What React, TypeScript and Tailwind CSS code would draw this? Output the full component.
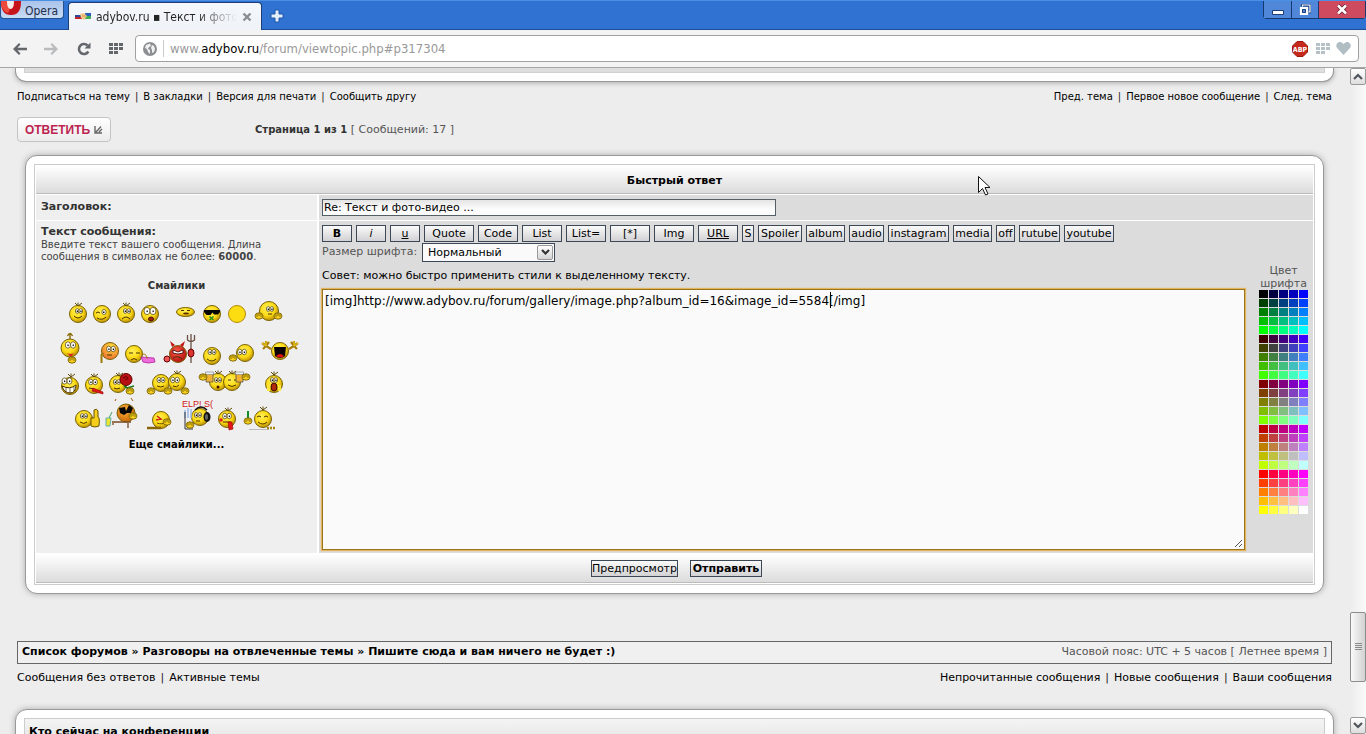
import React, { useState } from "react";

const LEVELS = ["00", "40", "80", "BF", "FF"];

function Sep() {
  return <span className="px-[5px] text-[#222]">|</span>;
}

function Face({ x, y, r = 9, fill = "url(#faceYellow)" }: { x: number; y: number; r?: number; fill?: string }) {
  return <circle cx={x} cy={y} r={r - 0.5} fill={fill} stroke="#7a6205" strokeWidth="1" />;
}

function Eyes({ x, y, size = 2 }: { x: number; y: number; size?: number }) {
  return (
    <g>
      <ellipse cx={x - size} cy={y} rx={size} ry={size + 0.6} fill="#fff" stroke="#4a3a00" strokeWidth="0.7" />
      <ellipse cx={x + size} cy={y} rx={size} ry={size + 0.6} fill="#fff" stroke="#4a3a00" strokeWidth="0.7" />
      <rect x={x - size - 0.5} y={y - 0.5} width="1.3" height="1.6" fill="#111" />
      <rect x={x + size - 0.5} y={y - 0.5} width="1.3" height="1.6" fill="#111" />
    </g>
  );
}

function Hair({ x, y }: { x: number; y: number }) {
  return <path d={`M${x} ${y}l-3 -3M${x} ${y}l0 -3.5M${x} ${y}l4 -3`} stroke="#5d4a0a" strokeWidth="1" fill="none" />;
}

function Hand({ x, y }: { x: number; y: number }) {
  return (
    <g stroke="#6b5404" strokeWidth="0.8">
      <ellipse cx={x} cy={y} rx="4" ry="3.2" fill="#f6cf1c" />
      <path d={`M${x - 2} ${y - 2}v3M${x} ${y - 3}v3M${x + 2} ${y - 2}v3`} fill="none" />
    </g>
  );
}

function Mouth({ d, fill = "none" }: { d: string; fill?: string }) {
  return <path d={d} fill={fill} stroke="#4a3200" strokeWidth="1" />;
}

function Smiley({ x, y, w, h, name, children }: { x: number; y: number; w: number; h: number; name: string; children: React.ReactNode }) {
  return (
    <a href="#smile" aria-label={name} className="block">
      <svg width={w} height={h} viewBox={`${x} ${y} ${w} ${h}`} className="block overflow-visible">
        {children}
      </svg>
    </a>
  );
}

function Smilies() {
  return (
    <div className="flex flex-col items-center">
      <svg width="0" height="0" className="absolute" aria-hidden="true">
        <defs>
          <radialGradient id="faceYellow" cx="42%" cy="36%" r="65%">
            <stop offset="0%" stopColor="#fff05a" />
            <stop offset="60%" stopColor="#fbd914" />
            <stop offset="100%" stopColor="#b98d06" />
          </radialGradient>
          <radialGradient id="faceRed" cx="42%" cy="36%" r="65%">
            <stop offset="0%" stopColor="#ff5a4a" />
            <stop offset="100%" stopColor="#b01010" />
          </radialGradient>
          <radialGradient id="faceOrange" cx="42%" cy="36%" r="65%">
            <stop offset="0%" stopColor="#ffb53c" />
            <stop offset="100%" stopColor="#c96808" />
          </radialGradient>
          <radialGradient id="faceBlush" cx="60%" cy="25%" r="80%">
            <stop offset="0%" stopColor="#ffe23c" />
            <stop offset="100%" stopColor="#ee6a30" />
          </radialGradient>
        </defs>
      </svg>

      <div className="flex">
        <Smiley x={15} y={28} w={24} h={30} name="smile">
          <Face x={27} y={44} /><Hair x={27} y={36} /><Eyes x={28} y={41} size={1.8} /><Mouth d="M23 46q4 4 8 0" />
        </Smiley>
        <Smiley x={39} y={28} w={24} h={30} name="wink">
          <Face x={51} y={44} /><ellipse cx="53" cy="42" rx="2.200" ry="2.500" fill="#fff" stroke="#4a3a00" strokeWidth="0.700" /><rect x="52" y="41.500" width="1.500" height="1.500" fill="#111" /><Mouth d="M45 43q2 -2 4 0M46 48q5 3 9 -1" />
        </Smiley>
        <Smiley x={63} y={28} w={24} h={30} name="sad">
          <Face x={75} y={44} /><Hair x={75} y={36} /><Eyes x={76} y={41} size={1.8} /><Mouth d="M71 49q4 -4 8 0" />
        </Smiley>
        <Smiley x={87} y={28} w={24} h={30} name="shock">
          <Face x={99} y={44} /><Eyes x={99} y={41} size={3} /><ellipse cx="100" cy="49" rx="2.5" ry="2" fill="#a02010" stroke="#401000" />
        </Smiley>
        <Smiley x={111} y={28} w={37} h={30} name="flat">
          <ellipse cx="134.5" cy="42" rx="9" ry="4.5" fill="url(#faceYellow)" stroke="#7a6205" /><Mouth d="M130 40.500h3M136 40.500h3" /><ellipse cx="135" cy="43.500" rx="3" ry="1" fill="#5a2a00" />
        </Smiley>
        <Smiley x={148} y={28} w={26} h={30} name="cool">
          <Face x={161} y={44} /><path d="M153 40h16v2l-2 2.500h-4l-1.500 -2l-2 2.500h-4l-2.500 -3z" fill="#050505" /><path d="M158.500 46.500l4 3.500M162.500 46.500l-4 3.500" stroke="#158a1a" strokeWidth="1.200" />
        </Smiley>
        <Smiley x={174} y={28} w={25} h={30} name="plain">
          <circle cx="186" cy="44" r="8.500" fill="#fbdd12" stroke="#b58a08" />
        </Smiley>
        <Smiley x={199} y={28} w={36} h={30} name="hands">
          <Face x={218} y={41} r={10} /><Eyes x={219} y={39} size={1.8} /><Mouth d="M217 44h4" /><Hand x={208} y={46} /><Hand x={227} y={46} />
        </Smiley>
      </div>

      <div className="flex">
        <Smiley x={2} y={58} w={39} h={39} name="idea">
          <path d="M21 70v-6M18.500 66q2.500 -5 5 0" stroke="#8a6a08" strokeWidth="1.400" fill="none" /><Face x={21} y={78} r={9.5} /><Eyes x={21.5} y={75} size={2.6} /><path d="M18 83q4 2 7 0l-3 4z" fill="#d22" /><Hand x={23} y={90} />
        </Smiley>
        <Smiley x={41} y={58} w={32} h={39} name="blush">
          <Face x={61} y={81} fill="url(#faceBlush)" /><Eyes x={62} y={79} size={2.2} /><Mouth d="M58 85h5" /><path d="M52.500 93v-8l2 -2" stroke="#9a7a0a" strokeWidth="2" fill="none" />
        </Smiley>
        <Smiley x={73} y={58} w={36} h={39} name="cry">
          <Face x={85} y={84} /><Mouth d="M80 83h4M87 83h4M82 90q3 -3 6 0" /><path d="M92 87l13 1l1 4q-7 2 -12 0z" fill="#f06bdc" stroke="#b020a0" strokeWidth="0.800" /><path d="M94 84q4 0 4 5" stroke="#a07d10" fill="none" />
        </Smiley>
        <Smiley x={109} y={58} w={41} h={39} name="devil">
          <Face x={129} y={84} fill="url(#faceRed)" /><path d="M123 77l-2 -6l5 4zM134 77l2 -6l-5 4z" fill="#c41414" /><path d="M124 80l5 2l5 -2v3l-5 1l-5 -1z" fill="#fff" stroke="#300" strokeWidth="0.800" /><Mouth d="M124 88q5 -3 9 1" /><path d="M142 64v29M138.500 65v5q3.500 3 7 0v-5" stroke="#6a5045" strokeWidth="1.300" fill="none" /><ellipse cx="142" cy="83" rx="3" ry="4" fill="#d33" stroke="#600" /><ellipse cx="118" cy="89" rx="3" ry="3" fill="#e55" stroke="#600" />
        </Smiley>
        <Smiley x={150} y={58} w={27} h={39} name="happy">
          <Face x={163} y={86} /><Eyes x={163} y={82} /><Mouth d="M158 89q5 4 9 0" />
        </Smiley>
        <Smiley x={177} y={58} w={33} h={39} name="whisper">
          <Face x={196} y={83} /><Eyes x={193} y={82} size={2.2} /><Hand x={184} y={88} />
        </Smiley>
        <Smiley x={210} y={58} w={42} h={39} name="scream">
          <Face x={231} y={81} /><path d="M225 77h12l-1 9q-5 4 -10 0z" fill="#080000" /><path d="M227 86q4 -4 8 0q-4 3 -8 0z" fill="#d11" />
          <path d="M222 79l-5 -3M217 76l-4 -3M217 76l-3 3M217 76v-5M217 76l3 -4M240 79l5 -3M245 76l4 -3M245 76l3 3M245 76v-5M245 76l-3 -4" stroke="#a87f08" strokeWidth="2.200" /><path d="M217 76l-4 -3M217 76v-5M245 76l4 -3M245 76v-5" stroke="#f9d920" />
        </Smiley>
      </div>

      <div className="flex">
        <Smiley x={6} y={97} w={26} h={30} name="crazy">
          <Face x={20} y={116} /><Hair x={21} y={107} /><Eyes x={17} y={111} size={2.5} /><path d="M12 116q8 4 14 -1q0 8 -6 8q-6 0 -8 -7z" fill="#fff" stroke="#433000" /><path d="M16 118v4M20 118v5M24 117v4" stroke="#433000" strokeWidth="0.700" />
        </Smiley>
        <Smiley x={32} y={97} w={26} h={30} name="tongue">
          <Face x={44} y={115} /><Hair x={44} y={107} /><Eyes x={43} y={112} size={2.2} /><Mouth d="M39 118l5 1" /><path d="M43 118l10 4v2l-11 -3z" fill="#e01818" stroke="#900" strokeWidth="0.600" />
        </Smiley>
        <Smiley x={58} y={97} w={32} h={30} name="rose">
          <Face x={68} y={114} /><Hair x={69} y={106} /><Eyes x={67} y={112} size={1.8} /><Mouth d="M64 118q3 2 6 0" /><circle cx="76" cy="109.500" r="6" fill="#b80f14" stroke="#600" /><path d="M73 108q3 -3 5 0q-1 3 -3 1" stroke="#600" fill="none" /><path d="M74 116l8 5M77 118l7 -2" stroke="#157a15" strokeWidth="1.500" /><Hand x={80} y={121} />
        </Smiley>
        <Smiley x={90} y={97} w={54} h={30} name="friends">
          <Face x={111} y={113} /><Face x={127} y={112} /><Hair x={127} y={104} /><Eyes x={111} y={110} /><Eyes x={125} y={110} size={2.2} /><Mouth d="M107 116q4 2 7 0M123 116q4 2 6 -1" /><Hand x={101} y={121} /><Hand x={135} y={121} /><Hand x={118} y={121} />
        </Smiley>
        <Smiley x={144} y={97} w={62} h={30} name="beer">
          <Face x={168} y={112} /><Face x={182} y={112} /><Hair x={168} y={104} /><Hair x={182} y={104} /><Eyes x={168} y={110} size={1.8} /><Mouth d="M178 110h3M184 110h3M178 115q4 3 8 0" /><circle cx="168" cy="117" r="1.500" fill="#401000" />
          <path d="M156 103h7v9h-7zM186 103h7v9h-7z" fill="#f0b030" stroke="#555" strokeWidth="0.800" /><path d="M155.500 102h8v2.500h-8zM185.500 102h8v2.500h-8z" fill="#e8f0f8" stroke="#777" strokeWidth="0.600" /><Hand x={153} y={107} /><Hand x={196} y={107} />
        </Smiley>
        <Smiley x={206} y={97} w={40} h={30} name="scared">
          <Face x={224} y={114} /><Hair x={224} y={105} /><Eyes x={224} y={110} size={1.8} /><ellipse cx="224" cy="117" rx="3" ry="4" fill="#b02a10" stroke="#3a0e00" /><path d="M218.500 121v-6M229.500 121v-6" stroke="#ffe63c" strokeWidth="3" />
        </Smiley>
      </div>

      <div className="flex">
        <Smiley x={22} y={127} w={30} h={35} name="thumb">
          <Face x={35} y={149} /><Eyes x={35} y={146} size={1.8} /><Mouth d="M31 152q4 3 7 0" /><path d="M42 148h3v-8q3 -2 4 1v6q2 0 1 9q-4 2 -8 0z" fill="#f4ce1a" stroke="#6b5404" />
        </Smiley>
        <Smiley x={52} y={127} w={42} h={35} name="relax">
          <Face x={77} y={143} r={9.5} fill="url(#faceOrange)" /><path d="M70 138l6 -1l1 4l3 -6l4 3l-2 5l-4 0l-3 2l-4 -2z" fill="#080808" /><path d="M67 129l-1 2M82 128l2 3" stroke="#a05a10" /><path d="M63 152h19M64 153v2M79 153v5" stroke="#7a4a20" strokeWidth="1.300" /><path d="M57 148h5l-1 8h-4z" fill="#e8e830" stroke="#6aa" /><path d="M60 148l3 -6" stroke="#3ca060" /><Hand x={84} y={146} />
        </Smiley>
        <Smiley x={94} y={127} w={36} h={35} name="kiss">
          <Face x={112} y={150} /><path d="M108 146l4 3l-5 1" stroke="#d02010" strokeWidth="1.500" fill="none" /><path d="M108 153q4 2 12 -1" stroke="#6b4a04" fill="none" /><Hand x={118} y={152} /><path d="M98 158h14" stroke="#8a6508" strokeWidth="2.500" />
        </Smiley>
        <Smiley x={130} y={127} w={37} h={35} name="help">
          <text x="133" y="137" fontSize="9" fill="#d01818" className="font-['Liberation_Sans',sans-serif]">ELP! S(</text>
          <Face x={151} y={147} /><Eyes x={149} y={145} size={1.8} /><Mouth d="M147 151h4" /><path d="M136 140v8M139 138v10M142 139v9" stroke="#9ab8e8" strokeWidth="1.500" /><path d="M136 142v17h8" stroke="#333" fill="none" /><path d="M146 140q6 -6 12 0" stroke="#111" strokeWidth="1.500" fill="none" /><ellipse cx="158" cy="147" rx="3.500" ry="5" fill="#111" /><ellipse cx="157.500" cy="147" rx="1.500" ry="3" fill="#666" /><Hand x={141} y={155} />
        </Smiley>
        <Smiley x={167} y={127} w={28} h={35} name="tease">
          <Face x={178} y={149} /><Hair x={179} y={141} /><Eyes x={178} y={146} size={2.2} /><circle cx="172" cy="150" r="1.800" fill="#e02020" /><path d="M174 152h8" stroke="#402000" /><path d="M179 152l4 0l1 7l-4 1z" fill="#e31818" stroke="#900" strokeWidth="0.600" />
        </Smiley>
        <Smiley x={195} y={127} w={37} h={35} name="write">
          <Face x={214} y={149} /><Hair x={214} y={140} /><Mouth d="M208 147q2 -2 4 0M215 147q2 -2 4 0M209 152q5 4 9 0" /><path d="M199 141v12" stroke="#128a2a" strokeWidth="2" /><Hand x={199} y={151} /><path d="M200 159.500h20" stroke="#bbb" /><path d="M218 158h9" stroke="#a8880a" strokeWidth="2.500" strokeDasharray="2 1" />
        </Smiley>
      </div>
    </div>
  );
}

const CONTROL = "h-[17px] border border-[#3d4856] bg-linear-to-b from-[#fafafa] to-[#d2d2d4] p-0 text-center text-[11px] leading-[15px] text-black";

const TOOLS: [string, string][] = [
  ["B", "w-[30px] font-bold"],
  ["i", "w-[30px] italic"],
  ["u", "w-[30px] underline"],
  ["Quote", "w-[50px]"],
  ["Code", "w-[40px]"],
  ["List", "w-[40px]"],
  ["List=", "w-[40px]"],
  ["[*]", "w-[40px]"],
  ["Img", "w-[40px]"],
  ["URL", "w-[40px] underline"],
  ["S", "w-[12px]"],
  ["Spoiler", "w-[44px]"],
  ["album", "w-[39px]"],
  ["audio", "w-[35px]"],
  ["instagram", "w-[61px]"],
  ["media", "w-[39px]"],
  ["off", "w-[19px]"],
  ["rutube", "w-[41px]"],
  ["youtube", "w-[50px]"],
];

function ChromeBar() {
  return (
    <header className="font-['DejaVu_Sans_Condensed','DejaVu_Sans',sans-serif]">
      <div className="flex h-[30px] items-start border-t border-b border-t-[#4a8fe4] border-b-[#1c4d96] bg-[#2f72d2]">
        <button className="flex h-[18px] w-[64px] items-center rounded-b border border-t-0 border-[#24508f] bg-linear-to-b from-[#a9c3ea] to-[#c9dcf5]">
          <svg width="22" height="18" viewBox="0 0 22 18" className="shrink-0">
            <path d="M0 -4h20v5q0 13 -10 13q-10 0 -10 -13z" fill="#c7141a" />
            <path d="M0 -4h9v6q0 8 -2 10q-7 -2 -7 -11z" fill="#ee4a3c" />
            <path d="M6 -4h7v4q0 8 -3.500 8q-3.500 0 -3.500 -8z" fill="#f8ece8" />
          </svg>
          <span className="pl-[2px] pt-[3px] text-[12px] leading-[14px] text-[#1f2f4a]">Opera</span>
        </button>
        <div className="mt-px ml-[4px] flex h-[28px] w-[194px] items-center rounded-t border border-b-0 border-[#1d3f74] bg-linear-to-b from-[#f4f8fd] to-[#eff2f6] pl-[6px]">
          <svg width="17" height="9" viewBox="0 0 17 9" className="shrink-0">
            <path d="M0 1h7v2h-7z" fill="#f4f4f4" /><path d="M0 3h7v2h-7z" fill="#2c4a9a" /><path d="M0 5h7v2h-7z" fill="#c62020" />
            <path d="M10 1h6v3h-6z" fill="#2660b8" /><path d="M10 4h6v3h-6z" fill="#3fae50" />
            <path d="M5 2l4 -1l3 3l-3 4l-3 -2z" fill="#f1c98c" /><path d="M7 4h4" stroke="#d89a50" />
          </svg>
          <span className="ml-[4px] w-[141px] overflow-hidden bg-linear-to-r from-[#222] from-70% to-transparent bg-clip-text text-[12px] leading-[18px] whitespace-nowrap text-transparent">
            adybov.ru ▪ Текст и фото
          </span>
          <button aria-label="Закрыть вкладку" className="ml-[5px]">
            <svg width="10" height="10" viewBox="0 0 10 10"><path d="M1.500 1.500l7 7M8.500 1.500l-7 7" stroke="#8a8d92" strokeWidth="2.400" /></svg>
          </button>
        </div>
        <button aria-label="Новая вкладка" className="mt-[8px] ml-[8px]">
          <svg width="14" height="14" viewBox="0 0 14 14"><path d="M5 1h4v4h4v4h-4v4h-4v-4h-4v-4h4z" fill="#e4eefb" stroke="#1e56a8" /></svg>
        </button>
        <div className="ml-auto flex h-[18px] rounded-b border border-t-0 border-[#16396f] text-white">
          <button aria-label="Свернуть" className="flex w-[28px] items-center justify-center border-r border-[#16396f] bg-[#5087d8]">
            <svg width="12" height="14" viewBox="0 0 12 14"><path d="M0.500 7.500h11v4h-11z" fill="#fff" stroke="#1b3f78" /></svg>
          </button>
          <button aria-label="Развернуть" className="flex w-[27px] items-center justify-center border-r border-[#16396f] bg-[#5087d8]">
            <svg width="12" height="12" viewBox="0 0 12 12"><path d="M3.500 2.500v-1.500h7.500v7h-1.500" fill="none" stroke="#1b3f78" strokeWidth="3" /><path d="M3.500 2.500v-1.500h7.500v7h-1.500" fill="none" stroke="#fff" strokeWidth="1.200" /><path d="M2 4h6v6h-6z" fill="#5087d8" stroke="#fff" strokeWidth="2.200" /><path d="M3.500 5.500h3v3h-3z" fill="none" stroke="#1b3f78" /></svg>
          </button>
          <button aria-label="Закрыть" className="flex w-[46px] items-center justify-center bg-[#cd4a5f]">
            <svg width="12" height="11" viewBox="0 0 12 11"><path d="M2 1.500l8 8M10 1.500l-8 8" stroke="#6e1d2d" strokeWidth="4" /><path d="M2 1.500l8 8M10 1.500l-8 8" stroke="#fff" strokeWidth="2.600" /></svg>
          </button>
        </div>
      </div>

      <div className="flex h-[38px] items-center border-b border-[#a5a5a5] bg-[#f3f3f3] pr-[7px] pl-[13px]">
        <button aria-label="Назад"><svg width="14" height="12" viewBox="0 0 14 12"><path d="M0 6l6 -6l1.500 1.500l-3 3.200h9.500v2.600h-9.500l3 3.200l-1.500 1.500z" fill="#63666a" /></svg></button>
        <button aria-label="Вперёд" className="ml-[17px]"><svg width="14" height="12" viewBox="0 0 14 12"><path d="M14 6l-6 -6l-1.500 1.500l3 3.200h-9.500v2.600h9.500l-3 3.200l1.500 1.500z" fill="#b9bbbd" /></svg></button>
        <button aria-label="Обновить" className="ml-[19px]"><svg width="14" height="14" viewBox="0 0 14 14"><path d="M11.300 9.500a5 5 0 1 1 -0.800 -6" fill="none" stroke="#63666a" strokeWidth="2.600" /><path d="M13.500 0.500v6h-6z" fill="#63666a" /></svg></button>
        <button aria-label="Экспресс-панель" className="ml-[18px]">
          <svg width="15" height="12" viewBox="0 0 15 12" fill="#63666a">
            {[0, 5, 10].map((x) => [0, 4, 8].map((y) => (x === 10 && y === 8 ? null : <rect key={`${x}-${y}`} x={x} y={y} width="4" height="3" />)))}
          </svg>
        </button>
        <div className="ml-[11px] flex h-[27px] flex-1 items-center rounded-[4px] border border-[#a0a0a0] bg-white pr-[7px] pl-[6px]">
          <svg width="16" height="16" viewBox="0 0 16 16" className="shrink-0">
            <circle cx="8" cy="8" r="7" fill="#8c8f92" />
            <path d="M4 4l4 -1.500l1 2.500l-2 1l-1 2l2 1l0 4l-2 -2l-1 -3l-2 -1zM10 4l2 1l1 3l-1 3l-2 1l0 -3l-1 -2z" fill="#f1f1f1" />
          </svg>
          <span className="mx-[5px] h-[17px] w-px bg-[#ccc]" />
          <div className="relative ml-px flex-1">
            <span aria-hidden="true" className="block text-[13px] leading-[20px] whitespace-nowrap text-[#999]">
              www.<span className="text-black">adybov.ru</span>/forum/viewtopic.php#p317304
            </span>
            <input aria-label="Адрес" className="absolute inset-0 w-full bg-transparent outline-none" />
          </div>
          <svg width="16" height="16" viewBox="0 0 16 16" className="shrink-0">
            <path d="M5 0.500h6l4.500 4.500v6l-4.500 4.500h-6l-4.500 -4.500v-6z" fill="#c4291c" stroke="#9a1a10" />
            <text x="8" y="10.500" textAnchor="middle" fontSize="7" fontWeight="700" fill="#fff" className="font-['Liberation_Sans_Narrow','DejaVu_Sans_Condensed',sans-serif]">ABP</text>
          </svg>
          <svg width="14" height="12" viewBox="0 0 14 12" fill="#b5c1c7" className="ml-[8px] shrink-0">
            {[0, 5, 10].map((x) => [0, 4, 8].map((y) => (x === 10 && y === 8 ? null : <rect key={`${x}-${y}`} x={x} y={y} width="4" height="3" />)))}
          </svg>
          <svg width="15" height="13" viewBox="0 0 15 13" className="ml-[6px] shrink-0"><path d="M7.500 13l-6 -6.500q-2.500 -3 0 -5.500q3 -2.500 6 1q3 -3.500 6 -1q2.500 2.500 0 5.500z" fill="#b0bdc3" /></svg>
        </div>
      </div>
    </header>
  );
}

function Scrollbar() {
  return (
    <div className="flex w-[16px] shrink-0 flex-col bg-linear-to-r from-[#ececec] to-[#fafafa]">
      <button aria-label="Вверх" className="flex h-[17px] items-center justify-center rounded-[2px] border border-[#999] bg-linear-to-b from-white to-[#ddd]">
        <svg width="10" height="7" viewBox="0 0 10 7"><path d="M1 6l4 -4l4 4" fill="none" stroke="#50565c" strokeWidth="2.200" /></svg>
      </button>
      <div className="grow-[527]" />
      <div className="flex h-[70px] items-center justify-center rounded-[2px] border border-[#8d8d8d] bg-linear-to-r from-[#fafafa] to-[#d2d2d2]">
        <svg width="7" height="8" viewBox="0 0 7 8"><path d="M0 0.500h7M0 2.500h7M0 4.500h7M0 6.500h7" stroke="#8a8a8a" /></svg>
      </div>
      <div className="grow-[35]" />
      <button aria-label="Вниз" className="flex h-[17px] items-center justify-center rounded-[2px] border border-[#999] bg-linear-to-b from-white to-[#ddd]">
        <svg width="10" height="7" viewBox="0 0 10 7"><path d="M1 1l4 4l4 -4" fill="none" stroke="#50565c" strokeWidth="2.200" /></svg>
      </button>
    </div>
  );
}

export default function App() {
  const [subject, setSubject] = useState("Re: Текст и фото-видео ...");
  const [message, setMessage] = useState("[img]http://www.adybov.ru/forum/gallery/image.php?album_id=16&image_id=5584[/img]");

  return (
    <div className="relative flex h-screen flex-col overflow-hidden bg-[#ededed] text-[#333] font-['DejaVu_Sans',sans-serif]">
      <ChromeBar />
      <div className="flex min-h-0 flex-1">
        <main className="min-w-0 flex-1 overflow-hidden">
          <div className="mr-[16px] ml-[15px] h-[14px] rounded-b-[11px] border border-t-0 border-[#999] bg-white px-[8px] shadow-[0_1px_5px_#aaa]">
            <div className="h-[5px] border border-t-0 border-[#d0d0d0] bg-[#dedede]" />
          </div>

          <div className="mr-[18px] ml-[17px]">
            <nav className="mt-[8px] flex justify-between text-[10px] leading-[14px] text-black">
              <div>
                <a href="#watch">Подписаться на тему</a><Sep /><a href="#bookmark">В закладки</a><Sep /><a href="#print">Версия для печати</a><Sep /><a href="#email">Сообщить другу</a>
              </div>
              <div>
                <a href="#prev">Пред. тема</a><Sep /><a href="#new">Первое новое сообщение</a><Sep /><a href="#next">След. тема</a>
              </div>
            </nav>

            <div className="mt-[13px] flex items-center">
              <button className="flex h-[25px] w-[94px] items-center justify-center gap-[4px] rounded-[4px] border border-[#c4c4c4] bg-linear-to-b from-white to-[#ececec] font-['Liberation_Sans',sans-serif] text-[12px] font-bold text-[#bb2550]">
                ОТВЕТИТЬ
                <svg width="9" height="9" viewBox="0 0 9 9"><path d="M1 1v7h7M2 7l5 -5.500M5 7l3 -3" fill="none" stroke="#666" strokeWidth="1.400" /></svg>
              </button>
              <p className="ml-[144px] text-[11px] leading-[14px] text-[#555]">
                <b className="text-[10px] text-[#333]">Страница 1 из 1</b> [ Сообщений: 17 ]
              </p>
            </div>

            <form onSubmit={(e) => e.preventDefault()} className="mt-[13px] mr-[8px] ml-[8px] rounded-[12px] border border-[#999] bg-white p-[8px] shadow-[0_0_6px_#aaa]">
              <div className="border border-[#ccc] p-px">
                <h3 className="flex h-[28px] items-center justify-center border-b border-[#bbb] bg-linear-to-b from-white to-[#dcdcdc] pt-[3px] text-[11px] font-bold text-black">Быстрый ответ</h3>
                <div className="mt-px grid grid-cols-[281px_1fr] gap-x-[2px] gap-y-px">
                  <div className="flex h-[25px] items-center bg-[#efefef] pl-[5px]">
                    <label htmlFor="subject" className="text-[11px] font-bold">Заголовок:</label>
                  </div>
                  <div className="flex items-center bg-[#dcdcdc] pl-[3px]">
                    <input id="subject" value={subject} onChange={(e) => setSubject(e.target.value)} className="h-[17px] w-[454px] border border-[#556066] bg-linear-to-b from-[#e4e4e4] to-[#fcfcfc] to-60% px-px text-[11px] leading-[15px] text-black outline-none" />
                  </div>

                  <div className="bg-[#efefef] pt-[4px] pl-[5px]">
                    <label htmlFor="message" className="block text-[11px] leading-[14px] font-bold">Текст сообщения:</label>
                    <p className="text-[10px] leading-[12px] text-[#444]">Введите текст вашего сообщения. Длина<br />сообщения в символах не более: <b>60000</b>.</p>
                    <div className="mt-[16px] -ml-[5px] text-center">
                      <h4 className="text-[10px] leading-[14px] font-bold">Смайлики</h4>
                      <div className="mt-[5px] pr-[2px]"><Smilies /></div>
                      <a href="#more" className="block pt-[6px] text-[10px] leading-[14px] font-bold text-black">Еще смайлики...</a>
                    </div>
                  </div>

                  <div className="flex bg-[#dcdcdc] pt-[4px] pb-[3px] pl-[3px]">
                    <div className="min-w-0 flex-1">
                      <div className="flex gap-[4px]">
                        {TOOLS.map(([label, style]) => (
                          <button key={label} type="button" className={`${CONTROL} shrink-0 whitespace-nowrap ${style}`}>{label}</button>
                        ))}
                      </div>
                      <div className="mt-px flex items-center">
                        <label htmlFor="size" className="w-[100px] text-[11px] whitespace-nowrap text-[#555]">Размер шрифта:</label>
                        <div className="relative">
                          <select id="size" className="block h-[19px] w-[133px] appearance-none border border-[#3d4856] bg-[#fafafa] pl-[5px] text-[11px] leading-[15px] text-black">
                            <option>Нормальный</option>
                          </select>
                          <span className="pointer-events-none absolute top-[2px] right-[2px] flex h-[15px] w-[16px] items-center justify-center rounded-[2px] border border-[#999] bg-linear-to-b from-white to-[#d4d4d4]">
                            <svg width="9" height="7" viewBox="0 0 9 7"><path d="M1 1l3.500 3.500l3.500 -3.500" fill="none" stroke="#333" strokeWidth="2.200" /></svg>
                          </span>
                        </div>
                      </div>
                      <p className="mt-[7px] text-[11px] leading-[14px] text-black">Совет: можно быстро применить стили к выделенному тексту.</p>
                      <div className="relative mt-[6px]">
                        <textarea id="message" value={message} onChange={(e) => setMessage(e.target.value)} className="block h-[261px] w-full resize-none border border-[#9c7420] bg-[#fafafa] px-[2px] pt-[3px] text-[12px] leading-[16px] text-black shadow-[0_0_1px_1px_#e2b45c] outline-none" />
                        <span className="absolute top-[3px] left-[508px] h-[16px] w-px bg-black" />
                        <svg width="9" height="9" viewBox="0 0 9 9" className="absolute right-[2px] bottom-[2px]"><path d="M1 8l7 -7M5 8l3 -3" stroke="#555" strokeWidth="1" /></svg>
                      </div>
                    </div>
                    <div className="mr-[5px] ml-[14px] w-[49px] shrink-0 pt-[39px] text-center">
                      <p className="text-[11px] leading-[13px] text-[#555]">Цвет шрифта</p>
                      <div className="grid grid-cols-5 gap-px">
                        {LEVELS.map((r) => LEVELS.map((g) => LEVELS.map((b) => (
                          <button key={r + g + b} type="button" aria-label={`#${r}${g}${b}`} className="h-[8px]" style={{ backgroundColor: `#${r}${g}${b}` }} />
                        ))))}
                      </div>
                    </div>
                  </div>
                </div>
                <div className="mt-px flex h-[29px] items-center justify-center gap-[12px] border-b border-[#bbb] bg-linear-to-b from-white to-[#dcdcdc] pl-[4px]">
                  <button type="button" className={`${CONTROL} w-[87px]`}>Предпросмотр</button>
                  <button type="submit" className={`${CONTROL} w-[72px] font-bold`}>Отправить</button>
                </div>
              </div>
            </form>

            <div className="mt-[47px] flex h-[23px] items-center justify-between border border-[#666] bg-[#f0f0f0] px-[4px]">
              <nav className="text-[11px] font-bold text-black">
                <a href="#index">Список форумов</a> » <a href="#talks">Разговоры на отвлеченные темы</a> » <a href="#topic">Пишите сюда и вам ничего не будет :)</a>
              </nav>
              <span className="text-[11px] text-[#555]">Часовой пояс: UTC + 5 часов [ Летнее время ]</span>
            </div>
            <nav className="mt-[7px] flex justify-between text-[11px] leading-[14px] text-black">
              <div><a href="#unanswered">Сообщения без ответов</a><Sep /><a href="#active">Активные темы</a></div>
              <div><a href="#unread">Непрочитанные сообщения</a><Sep /><a href="#newposts">Новые сообщения</a><Sep /><a href="#own">Ваши сообщения</a></div>
            </nav>
          </div>

          <section className="mt-[24px] mr-[16px] ml-[15px] h-[60px] rounded-[12px] border border-[#999] bg-white p-[8px] shadow-[0_0_6px_#aaa]">
            <div className="h-[40px] border border-[#ccc] bg-linear-to-b from-[#f4f4f4] to-[#dcdcdc] pt-[6px] pl-[4px]">
              <h4 className="text-[11px] leading-[14px] font-bold text-black">Кто сейчас на конференции</h4>
            </div>
          </section>
        </main>
        <Scrollbar />
      </div>

      <svg width="12" height="20" viewBox="0 0 12 20" className="pointer-events-none absolute top-[176px] left-[978px]">
        <path d="M0.500 0.500v16l4 -4l3 6.500l2.500 -1l-3 -6.500h5z" fill="#fff" stroke="#111" />
      </svg>
    </div>
  );
}
